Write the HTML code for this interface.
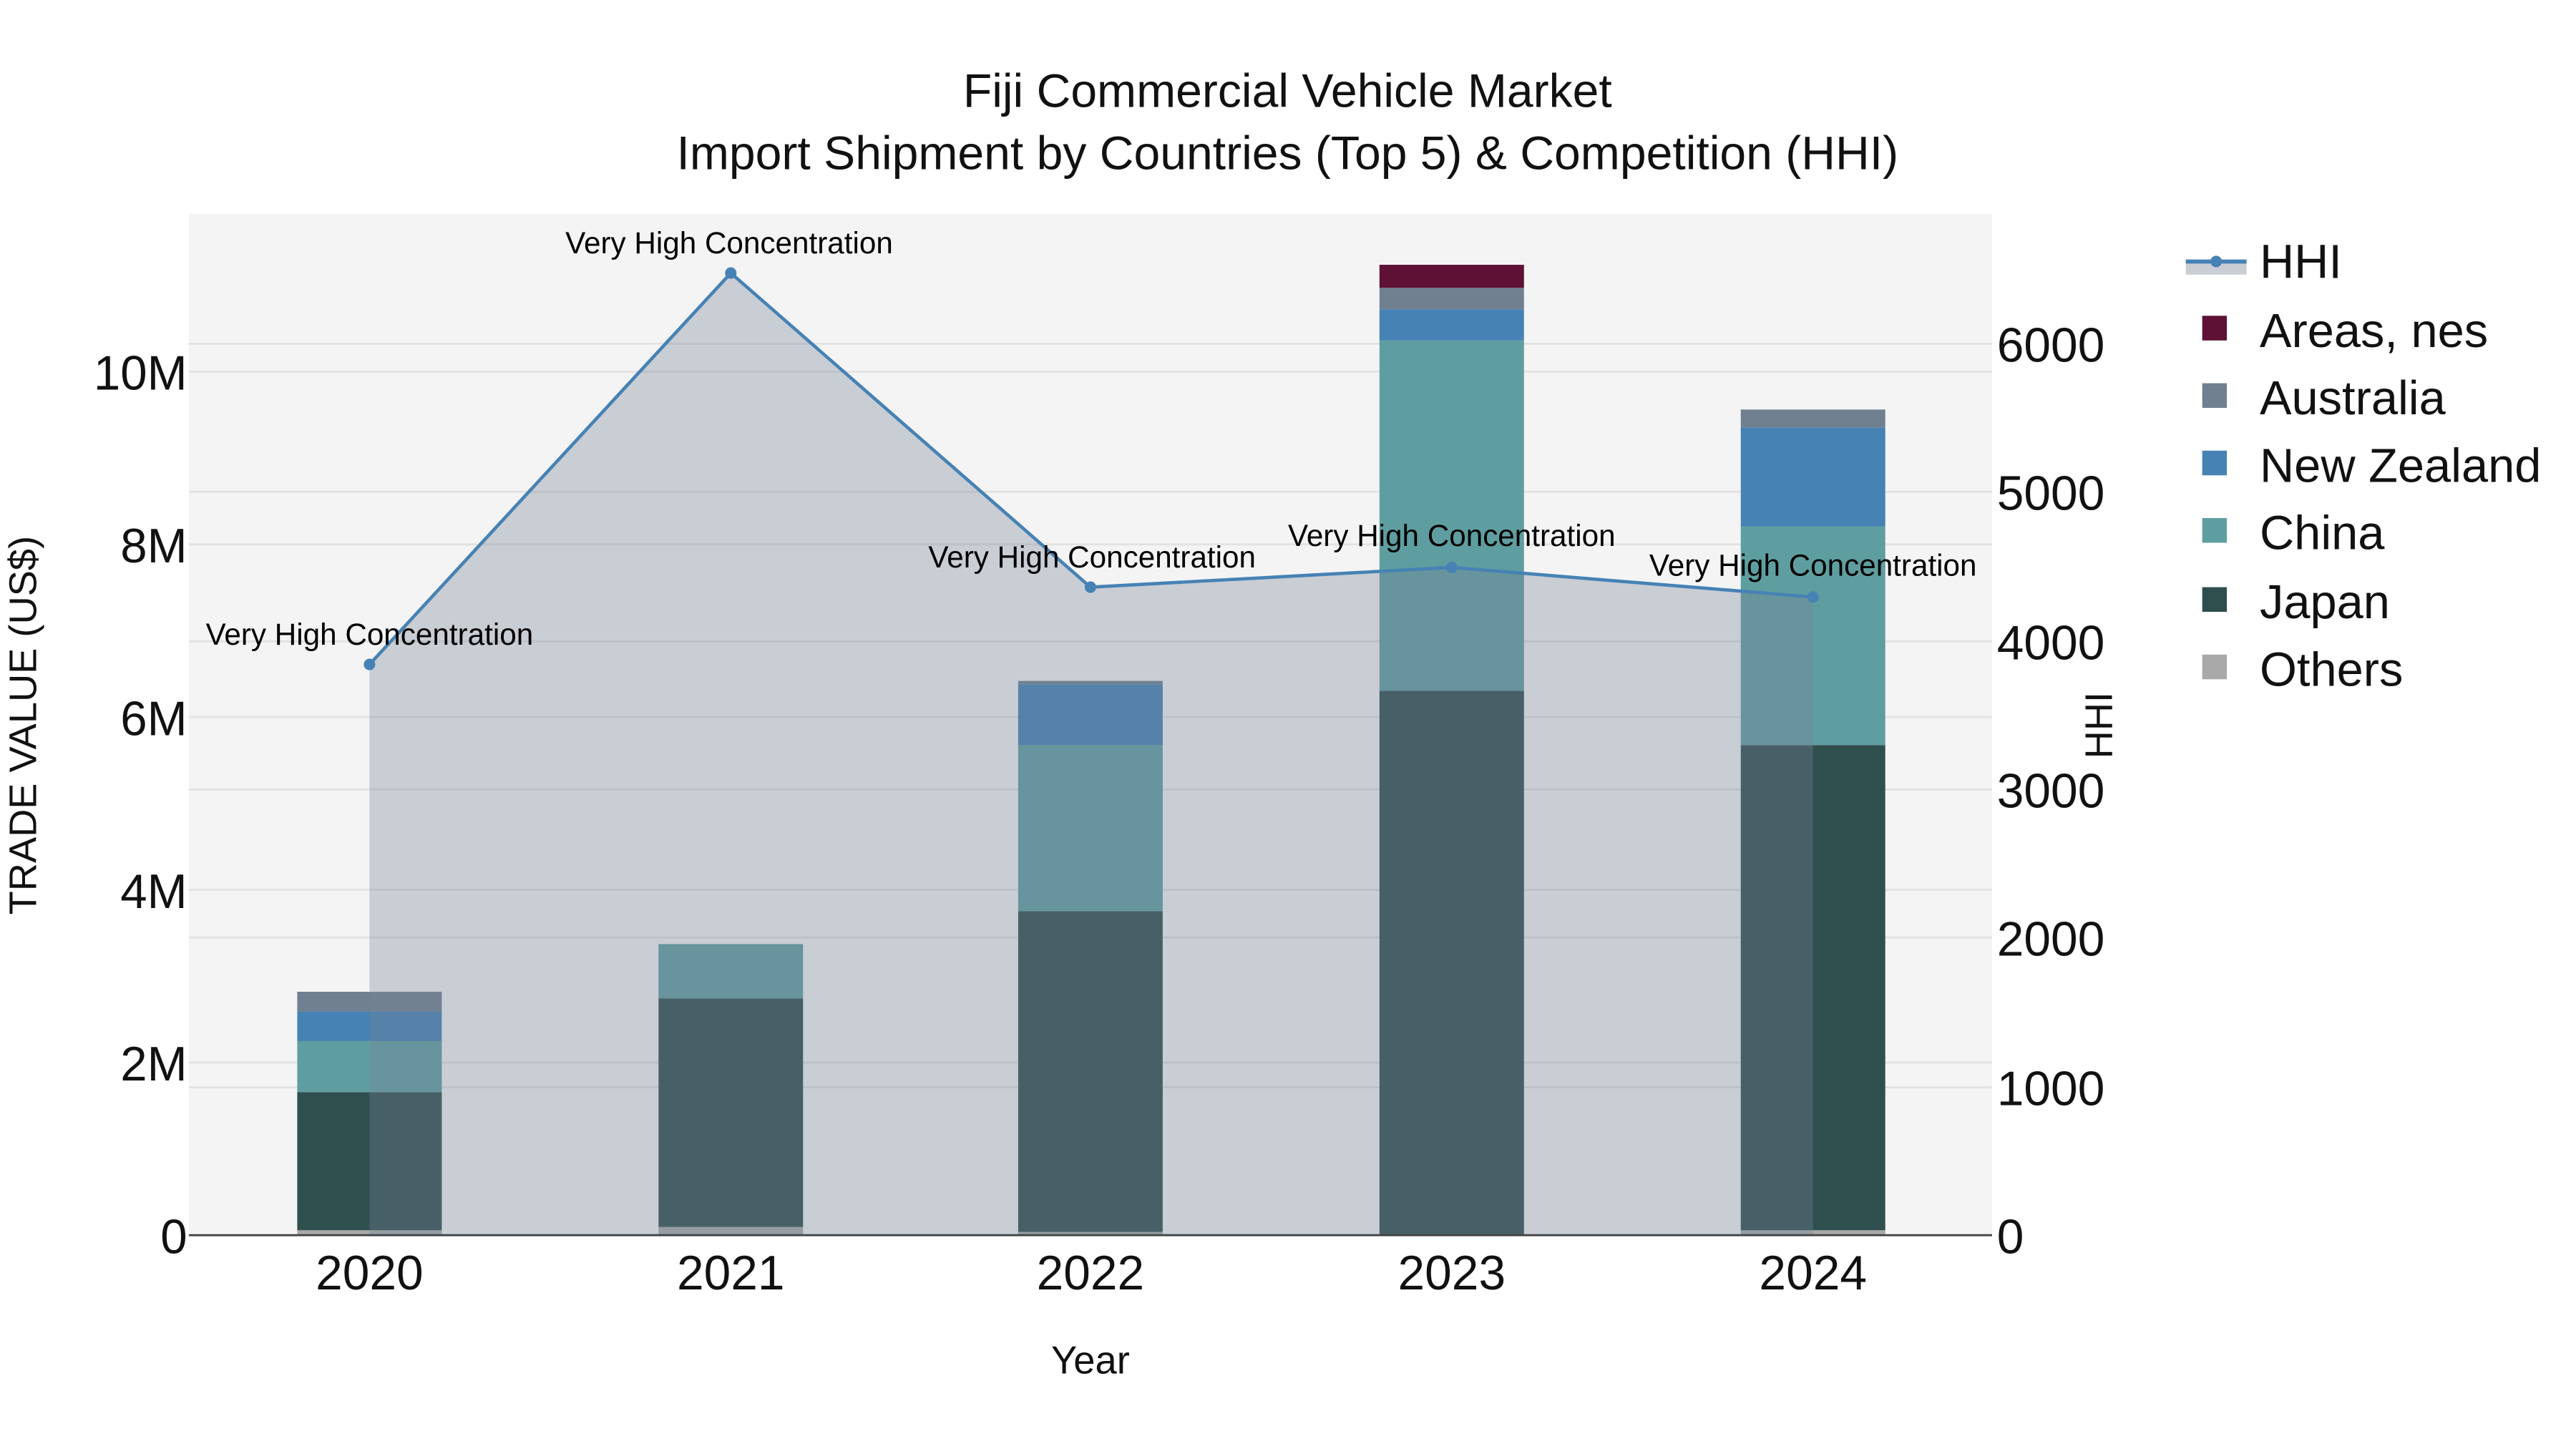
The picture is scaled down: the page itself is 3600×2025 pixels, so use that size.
<!DOCTYPE html>
<html><head><meta charset="utf-8"><style>html,body{margin:0;padding:0;background:#fff}svg{display:block}</style></head>
<body>
<svg width="3600" height="2025" viewBox="0 0 1568.6 881" preserveAspectRatio="none" xmlns="http://www.w3.org/2000/svg" font-family="Liberation Sans, Arial, sans-serif">
<rect x="0" y="0" width="1568.6" height="881" fill="#fff"/>
<rect x="115" y="130" width="1098" height="621" fill="#f4f4f4"/>
<g stroke="#e2e2e2" stroke-width="1.2">
<line x1="115" x2="1213" y1="646" y2="646"/><line x1="115" x2="1213" y1="541" y2="541"/><line x1="115" x2="1213" y1="436" y2="436"/><line x1="115" x2="1213" y1="331" y2="331"/><line x1="115" x2="1213" y1="226" y2="226"/>
<line x1="115" x2="1213" y1="661" y2="661"/><line x1="115" x2="1213" y1="570" y2="570"/><line x1="115" x2="1213" y1="480" y2="480"/><line x1="115" x2="1213" y1="390" y2="390"/><line x1="115" x2="1213" y1="299" y2="299"/><line x1="115" x2="1213" y1="209" y2="209"/>
</g>
<g>
<rect x="181" y="748" width="88" height="3" fill="#a9a9a9"/><rect x="181" y="664" width="88" height="84" fill="#2f4f4f"/><rect x="181" y="633" width="88" height="31" fill="#5f9ea0"/><rect x="181" y="615" width="88" height="18" fill="#4682b4"/><rect x="181" y="603" width="88" height="12" fill="#708090"/>
<rect x="401" y="746" width="88" height="5" fill="#a9a9a9"/><rect x="401" y="607" width="88" height="139" fill="#2f4f4f"/><rect x="401" y="574" width="88" height="33" fill="#5f9ea0"/>
<rect x="620" y="749" width="88" height="2" fill="#a9a9a9"/><rect x="620" y="554" width="88" height="195" fill="#2f4f4f"/><rect x="620" y="453" width="88" height="101" fill="#5f9ea0"/><rect x="620" y="416" width="88" height="37" fill="#4682b4"/><rect x="620" y="414" width="88" height="2" fill="#708090"/>
<rect x="840" y="420" width="88" height="331" fill="#2f4f4f"/><rect x="840" y="207" width="88" height="213" fill="#5f9ea0"/><rect x="840" y="188" width="88" height="19" fill="#4682b4"/><rect x="840" y="175" width="88" height="13" fill="#708090"/><rect x="840" y="161" width="88" height="14" fill="#5e1035"/>
<rect x="1060" y="748" width="88" height="3" fill="#a9a9a9"/><rect x="1060" y="453" width="88" height="295" fill="#2f4f4f"/><rect x="1060" y="320" width="88" height="133" fill="#5f9ea0"/><rect x="1060" y="260" width="88" height="60" fill="#4682b4"/><rect x="1060" y="249" width="88" height="11" fill="#708090"/>
</g>
<polygon points="225,751 225,404 445,166 664,357 884,345 1104,363 1104,751" fill="rgb(119,131,151)" fill-opacity="0.345"/>
<line x1="115" x2="1213" y1="751" y2="751" stroke="#444" stroke-width="1.3"/>
<polyline points="225,404 445,166 664,357 884,345 1104,363" fill="none" stroke="#4682b4" stroke-width="2"/>
<g fill="#4682b4"><circle cx="225" cy="404" r="3.5"/><circle cx="445" cy="166" r="3.5"/><circle cx="664" cy="357" r="3.5"/><circle cx="884" cy="345" r="3.5"/><circle cx="1104" cy="363" r="3.5"/></g>
<g font-size="18.4" text-anchor="middle" fill="#000">
<text x="225" y="392">Very High Concentration</text><text x="444" y="154">Very High Concentration</text><text x="665" y="345">Very High Concentration</text><text x="884" y="332">Very High Concentration</text><text x="1104" y="350">Very High Concentration</text>
</g>
<g font-size="28.8" text-anchor="middle" fill="#111">
<text x="784" y="65">Fiji Commercial Vehicle Market</text>
<text x="784" y="103">Import Shipment by Countries (Top 5) &amp; Competition (HHI)</text>
</g>
<g font-size="29.3" text-anchor="end" fill="#111">
<text x="114" y="762">0</text><text x="114" y="657">2M</text><text x="114" y="552">4M</text><text x="114" y="447">6M</text><text x="114" y="342">8M</text><text x="114" y="237">10M</text>
</g>
<g font-size="29.5" text-anchor="start" fill="#111">
<text x="1216" y="762">0</text><text x="1216" y="672">1000</text><text x="1216" y="581">2000</text><text x="1216" y="491">3000</text><text x="1216" y="401">4000</text><text x="1216" y="310">5000</text><text x="1216" y="220">6000</text>
</g>
<g font-size="29.5" text-anchor="middle" fill="#111">
<text x="225" y="784">2020</text><text x="445" y="784">2021</text><text x="664" y="784">2022</text><text x="884" y="784">2023</text><text x="1104" y="784">2024</text>
</g>
<text x="664" y="835" font-size="23.7" text-anchor="middle" fill="#111">Year</text>
<text transform="translate(22,441) rotate(-90)" font-size="23.6" text-anchor="middle" fill="#111">TRADE VALUE (US$)</text>
<text transform="translate(1286,441) rotate(-90)" font-size="23.6" text-anchor="middle" fill="#111">HHI</text>
<rect x="1331" y="159" width="37" height="8" fill="#c9cdd4"/>
<line x1="1331" x2="1368" y1="159" y2="159" stroke="#4682b4" stroke-width="2.5"/>
<circle cx="1349.5" cy="159" r="3.5" fill="#4682b4"/>
<g font-size="29.1" fill="#111">
<text x="1376" y="169">HHI</text><text x="1376" y="211">Areas, nes</text><text x="1376" y="252">Australia</text><text x="1376" y="293">New Zealand</text><text x="1376" y="334">China</text><text x="1376" y="376">Japan</text><text x="1376" y="417">Others</text>
</g>
<rect x="1341" y="192" width="15" height="15" fill="#5e1035"/>
<rect x="1341" y="233" width="15" height="15" fill="#708090"/>
<rect x="1341" y="274" width="15" height="15" fill="#4682b4"/>
<rect x="1341" y="315" width="15" height="15" fill="#5f9ea0"/>
<rect x="1341" y="357" width="15" height="15" fill="#2f4f4f"/>
<rect x="1341" y="398" width="15" height="15" fill="#a9a9a9"/>
</svg>
</body></html>
